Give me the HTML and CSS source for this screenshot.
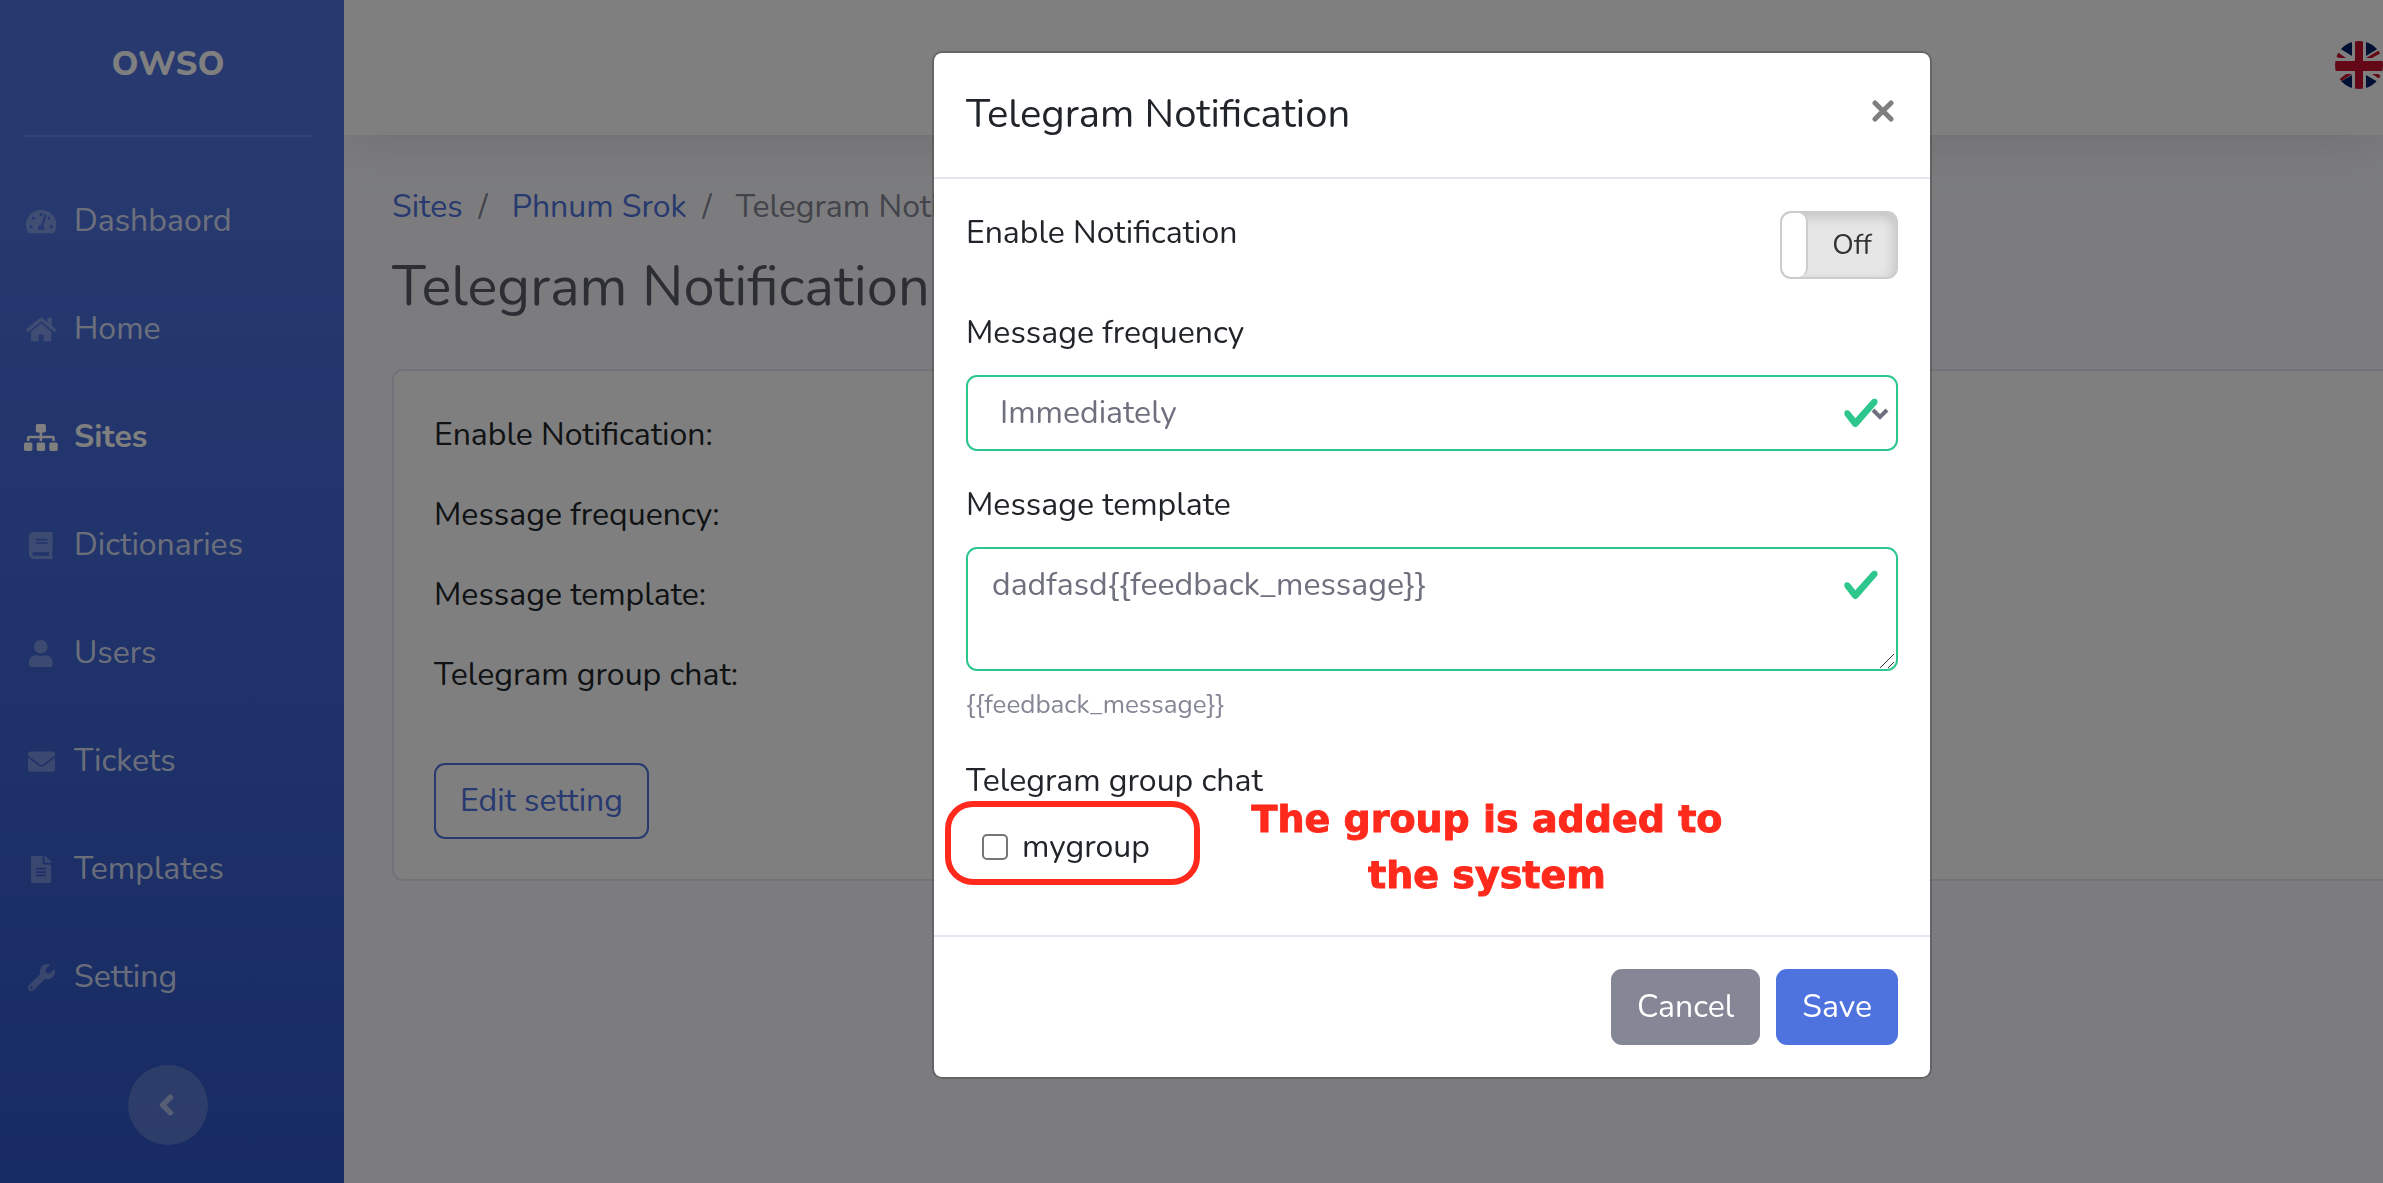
FILE: index.html
```html
<!DOCTYPE html>
<html lang="en">
<head>
<meta charset="utf-8">
<meta name="viewport" content="width=device-width, initial-scale=1">
<title>Telegram Notification</title>
<link rel="stylesheet" href="styles.css">
</head>
<body>
<div class="wrapper">
  <aside class="sidebar">
    <a class="brand" href="#">OWSO</a>
    <hr class="sidebar-divider">
    <nav class="nav">
      <a class="nav-link" href="#">
        <span class="nav-icon"><svg class="icon" viewBox="0 0 576 512" aria-hidden="true"><path d="M288 32C128.94 32 0 160.94 0 320c0 52.8 14.25 102.26 39.06 144.8 5.61 9.62 16.3 15.2 27.44 15.2h443c11.14 0 21.83-5.58 27.44-15.2C561.75 422.26 576 372.8 576 320c0-159.06-128.94-288-288-288zm0 64c14.71 0 26.58 10.13 30.32 23.65-1.11 2.26-2.64 4.23-3.45 6.67l-9.22 27.67c-5.13 3.49-10.97 6.01-17.64 6.01-17.67 0-32-14.33-32-32S270.33 96 288 96zM96 384c-17.67 0-32-14.33-32-32s14.33-32 32-32 32 14.33 32 32-14.33 32-32 32zm48-160c-17.67 0-32-14.33-32-32s14.33-32 32-32 32 14.33 32 32-14.33 32-32 32zm246.77-72.41l-61.33 184C343.13 347.33 352 364.54 352 384c0 11.72-3.38 22.55-8.88 32H232.88c-5.5-9.45-8.88-20.28-8.88-32 0-33.94 26.5-61.43 59.9-63.59l61.34-184.01c4.17-12.56 17.73-19.45 30.36-15.17 12.57 4.19 19.35 17.79 15.17 30.36zm14.66 57.2l15.52-46.55c3.47-1.29 7.13-2.23 11.05-2.23 17.67 0 32 14.33 32 32s-14.33 32-32 32c-11.38-.01-20.89-6.28-26.57-15.22zM480 384c-17.67 0-32-14.33-32-32s14.33-32 32-32 32 14.33 32 32-14.33 32-32 32z"/></svg></span>
        <span>Dashbaord</span>
      </a>
      <a class="nav-link" href="#">
        <span class="nav-icon"><svg class="icon" viewBox="0 0 576 512" aria-hidden="true"><path d="M280.37 148.26L96 300.11V464a16 16 0 0 0 16 16l112.06-.29a16 16 0 0 0 15.92-16V368a16 16 0 0 1 16-16h64a16 16 0 0 1 16 16v95.64a16 16 0 0 0 16 16.05L464 480a16 16 0 0 0 16-16V300L295.67 148.26a12.19 12.19 0 0 0-15.3 0zM571.6 251.47L488 182.56V44.05a12 12 0 0 0-12-12h-56a12 12 0 0 0-12 12v72.61L318.47 43a48 48 0 0 0-61 0L4.34 251.47a12 12 0 0 0-1.6 16.9l25.5 31A12 12 0 0 0 45.15 301l235.22-193.74a12.19 12.19 0 0 1 15.3 0L530.9 301a12 12 0 0 0 16.9-1.6l25.5-31a12 12 0 0 0-1.7-16.93z"/></svg></span>
        <span>Home</span>
      </a>
      <a class="nav-link active" href="#" aria-current="page">
        <span class="nav-icon"><svg class="icon" viewBox="0 0 640 512" aria-hidden="true"><path d="M128 352H32c-17.67 0-32 14.33-32 32v96c0 17.67 14.33 32 32 32h96c17.67 0 32-14.33 32-32v-96c0-17.67-14.33-32-32-32zm-24-80h192v48h48v-48h192v48h48v-57.59c0-21.17-17.23-38.41-38.41-38.41H344v-64h40c17.67 0 32-14.33 32-32V32c0-17.67-14.33-32-32-32H256c-17.67 0-32 14.33-32 32v96c0 17.67 14.33 32 32 32h40v64H94.41C73.23 224 56 241.23 56 262.41V320h48v-48zm264 80h-96c-17.67 0-32 14.33-32 32v96c0 17.67 14.33 32 32 32h96c17.67 0 32-14.33 32-32v-96c0-17.67-14.33-32-32-32zm240 0h-96c-17.67 0-32 14.33-32 32v96c0 17.67 14.33 32 32 32h96c17.67 0 32-14.33 32-32v-96c0-17.67-14.33-32-32-32z"/></svg></span>
        <span>Sites</span>
      </a>
      <a class="nav-link" href="#">
        <span class="nav-icon"><svg class="icon" viewBox="0 0 448 512" aria-hidden="true"><path d="M448 360V24c0-13.3-10.7-24-24-24H96C43 0 0 43 0 96v320c0 53 43 96 96 96h328c13.3 0 24-10.7 24-24v-16c0-7.5-3.5-14.3-8.9-18.7-4.2-15.4-4.2-59.3 0-74.7 5.4-4.3 8.9-11.1 8.9-18.6zM128 134c0-3.3 2.7-6 6-6h212c3.3 0 6 2.7 6 6v20c0 3.3-2.7 6-6 6H134c-3.3 0-6-2.7-6-6v-20zm0 64c0-3.3 2.7-6 6-6h212c3.3 0 6 2.7 6 6v20c0 3.3-2.7 6-6 6H134c-3.3 0-6-2.7-6-6v-20zm253.4 250H96c-17.7 0-32-14.3-32-32 0-17.6 14.4-32 32-32h285.4c-1.9 17.1-1.9 46.9 0 64z"/></svg></span>
        <span>Dictionaries</span>
      </a>
      <a class="nav-link" href="#">
        <span class="nav-icon"><svg class="icon" viewBox="0 0 448 512" aria-hidden="true"><path d="M224 256c70.7 0 128-57.3 128-128S294.7 0 224 0 96 57.3 96 128s57.3 128 128 128zm89.6 32h-16.7c-22.2 10.2-46.9 16-72.9 16s-50.6-5.8-72.9-16h-16.7C60.2 288 0 348.2 0 422.4V464c0 26.5 21.5 48 48 48h352c26.5 0 48-21.5 48-48v-41.6c0-74.2-60.2-134.4-134.4-134.4z"/></svg></span>
        <span>Users</span>
      </a>
      <a class="nav-link" href="#">
        <span class="nav-icon"><svg class="icon" viewBox="0 0 512 512" aria-hidden="true"><path d="M502.3 190.8c3.9-3.1 9.7-.2 9.7 4.7V400c0 26.5-21.5 48-48 48H48c-26.5 0-48-21.5-48-48V195.6c0-5 5.7-7.8 9.7-4.7 22.4 17.4 52.1 39.5 154.1 113.6 21.1 15.4 56.7 47.8 92.2 47.6 35.7.3 72-32.8 92.3-47.6 102-74.1 131.6-96.3 154-113.7zM256 320c23.2.4 56.6-29.2 73.4-41.4 132.7-96.3 142.8-104.7 173.4-128.7 5.8-4.5 9.2-11.5 9.2-18.9v-19c0-26.5-21.5-48-48-48H48c-26.5 0-48 21.5-48 48v19c0 7.4 3.4 14.3 9.2 18.9 30.6 23.9 40.7 32.4 173.4 128.7 16.8 12.2 50.2 41.8 73.4 41.4z"/></svg></span>
        <span>Tickets</span>
      </a>
      <a class="nav-link" href="#">
        <span class="nav-icon"><svg class="icon" viewBox="0 0 384 512" aria-hidden="true"><path d="M224 136V0H24C10.7 0 0 10.7 0 24v464c0 13.3 10.7 24 24 24h336c13.3 0 24-10.7 24-24V160H248c-13.2 0-24-10.8-24-24zm64 236c0 6.6-5.4 12-12 12H108c-6.6 0-12-5.4-12-12v-8c0-6.6 5.4-12 12-12h168c6.6 0 12 5.4 12 12v8zm0-64c0 6.6-5.4 12-12 12H108c-6.6 0-12-5.4-12-12v-8c0-6.6 5.4-12 12-12h168c6.6 0 12 5.4 12 12v8zm0-72v8c0 6.6-5.4 12-12 12H108c-6.6 0-12-5.4-12-12v-8c0-6.6 5.4-12 12-12h168c6.6 0 12 5.4 12 12zm96-114.1v6.1H256V0h6.1c6.4 0 12.5 2.5 17 7l97.9 98c4.5 4.5 7 10.6 7 16.9z"/></svg></span>
        <span>Templates</span>
      </a>
      <a class="nav-link" href="#">
        <span class="nav-icon"><svg class="icon" viewBox="0 0 512 512" aria-hidden="true"><path d="M507.73 109.1c-2.24-9.03-13.54-12.09-20.12-5.51l-74.36 74.36-67.88-11.31-11.31-67.88 74.36-74.36c6.62-6.62 3.43-17.9-5.66-20.16-47.38-11.74-99.55.91-136.58 37.93-39.64 39.64-50.55 97.1-34.05 147.2L18.74 402.76c-24.99 24.99-24.99 65.51 0 90.5 24.99 24.99 65.51 24.99 90.5 0l213.21-213.21c50.12 16.71 107.47 5.68 147.37-34.22 37.07-37.07 49.7-89.32 37.91-136.73zM64 472c-13.25 0-24-10.75-24-24 0-13.26 10.75-24 24-24s24 10.74 24 24c0 13.25-10.75 24-24 24z"/></svg></span>
        <span>Setting</span>
      </a>
    </nav>
    <button class="sidebar-toggle" type="button" aria-label="Collapse sidebar">
      <svg class="toggle-icon" viewBox="0 0 256 512" aria-hidden="true"><path d="M31.7 239l136-136c9.4-9.4 24.6-9.4 33.9 0l22.6 22.6c9.4 9.4 9.4 24.6 0 33.9L127.9 256l96.4 96.4c9.4 9.4 9.4 24.6 0 33.9L201.7 409c-9.4 9.4-24.6 9.4-33.9 0l-136-136c-9.5-9.4-9.5-24.6-.1-34z"/></svg>
    </button>
  </aside>

  <div class="content">
    <header class="topbar">
      <button class="language" type="button" aria-label="Language: English">
        <svg class="flag" viewBox="0 0 48 48" aria-hidden="true">
          <clipPath id="round"><circle cx="24" cy="24" r="24"/></clipPath>
          <g clip-path="url(#round)">
            <path fill="#fff" d="M0 0h48v48H0z"/>
            <path fill="#012169" d="M17 0v15L4 7V0zM31 0v15l13-8V0zM17 48V34L5 41v7zM31 48V34l12 7v7z"/>
            <path fill="#c8102e" d="M1 10l10 7H4l-4-2zM31 17l15-9v4l-9 5zM2 40l9-7h6L5 41zM37 33h6l6 4v4z"/>
            <path fill="#c8102e" d="M20 0h8v48h-8zM0 20h48v10H0z"/>
          </g>
        </svg>
      </button>
    </header>

    <main class="page">
      <nav aria-label="Breadcrumb">
        <ol class="breadcrumb">
          <li><a href="#">Sites</a></li>
          <li><a href="#">Phnum Srok</a></li>
          <li aria-current="page">Telegram Notification</li>
        </ol>
      </nav>
      <h1 class="page-title">Telegram Notification</h1>
      <section class="card">
        <div class="setting-list">
          <div>Enable Notification:</div>
          <div>Message frequency:</div>
          <div>Message template:</div>
          <div>Telegram group chat:</div>
        </div>
        <button class="btn btn-outline" type="button">Edit setting</button>
      </section>
    </main>
  </div>
</div>

<div class="modal-backdrop">
  <form class="modal" role="dialog" aria-labelledby="modal-title">
    <header class="modal-header">
      <h2 class="modal-title" id="modal-title">Telegram Notification</h2>
      <button class="close" type="button" aria-label="Close">
        <svg class="close-icon" viewBox="0 0 22 22" aria-hidden="true"><path d="M3 3l16 16M19 3L3 19"/></svg>
      </button>
    </header>

    <div class="modal-body">
      <div class="switch-row">
        <label for="enable">Enable Notification</label>
        <label class="switch">
          <input class="switch-input" type="checkbox" id="enable">
          <span class="switch-text">Off</span>
        </label>
      </div>

      <div class="field">
        <label for="frequency">Message frequency</label>
        <div class="control">
          <select class="input select" id="frequency">
            <option>Immediately</option>
          </select>
          <svg class="valid" viewBox="0 0 8 8" aria-hidden="true"><path d="M2.3 6.73L.6 4.53c-.4-1.04.46-1.4 1.1-.8l1.1 1.4 3.4-3.8c.6-.63 1.6-.27 1.2.7l-4 4.6c-.43.5-.8.4-1.1.1z"/></svg>
          <svg class="caret" viewBox="0 0 18 12" aria-hidden="true"><path d="M2 2l7 7 7-7"/></svg>
        </div>
      </div>

      <div class="field">
        <label for="template">Message template</label>
        <div class="control">
          <textarea class="input textarea" id="template" aria-describedby="template-help">dadfasd{{feedback_message}}</textarea>
          <svg class="valid" viewBox="0 0 8 8" aria-hidden="true"><path d="M2.3 6.73L.6 4.53c-.4-1.04.46-1.4 1.1-.8l1.1 1.4 3.4-3.8c.6-.63 1.6-.27 1.2.7l-4 4.6c-.43.5-.8.4-1.1.1z"/></svg>
          <svg class="grip" viewBox="0 0 16 16" aria-hidden="true"><path d="M1 15L15 1M9 15l6-6"/></svg>
        </div>
        <small class="help" id="template-help">{{feedback_message}}</small>
      </div>

      <fieldset class="group">
        <legend>Telegram group chat</legend>
        <div class="group-row">
          <input class="check" type="checkbox" id="mygroup">
          <label for="mygroup">mygroup</label>
          <span class="highlight"></span>
          <p class="callout">The group is added to the system</p>
        </div>
      </fieldset>
    </div>

    <footer class="modal-footer">
      <button class="btn btn-secondary" type="button">Cancel</button>
      <button class="btn btn-primary" type="submit">Save</button>
    </footer>
  </form>
</div>
</body>
</html>
```
FILE: styles.css
```css
* {
  box-sizing: border-box;
}

body {
  margin: 0;
  font: 32px/44px Nunito, Lato, sans-serif;
  color: #212529;
  background: #f8f9fc;
}

a {
  color: #4e73df;
  text-decoration: none;
}

button,
select,
textarea {
  font: inherit;
}

.wrapper {
  display: flex;
  min-height: 100vh;
}

/* Sidebar */

.sidebar {
  display: flex;
  flex-direction: column;
  flex: none;
  width: 344px;
  padding-right: 8px;
  background: linear-gradient(180deg, #4e73df 14%, #2f56c8 100%);
}

.brand {
  padding: 42px 0 49px;
  color: #fff;
  font-size: 34px;
  font-weight: 800;
  text-align: center;
}

.sidebar-divider {
  width: 288px;
  height: 2px;
  margin: 0 24px 29px;
  border: 0;
  background: rgba(255, 255, 255, .15);
}

.nav-link {
  display: flex;
  align-items: center;
  gap: 16px;
  padding: 33px 24px 31px;
  color: rgba(255, 255, 255, .8);
}

.nav-icon {
  display: flex;
  justify-content: center;
  width: 34px;
  color: rgba(255, 255, 255, .3);
}

.icon {
  height: 27px;
  fill: currentColor;
}

.nav-link.active,
.active .nav-icon {
  color: #fff;
  font-weight: 700;
}

.sidebar-toggle {
  display: flex;
  align-items: center;
  justify-content: center;
  align-self: center;
  width: 80px;
  height: 80px;
  margin: 35px 0 32px;
  padding: 0 4px 0 0;
  border: 0;
  border-radius: 50%;
  background: rgba(255, 255, 255, .2);
}

.toggle-icon {
  height: 34px;
  fill: rgba(255, 255, 255, .5);
}

/* Page */

.content {
  flex: 1;
  min-width: 0;
  overflow: hidden;
}

.topbar {
  display: flex;
  align-items: center;
  justify-content: flex-end;
  height: 135px;
  background: #fff;
  box-shadow: 0 5px 56px rgba(58, 59, 69, .15);
}

.language {
  display: flex;
  padding: 0;
  margin-bottom: 5px;
  border: 0;
  background: none;
}

.flag {
  width: 48px;
  height: 48px;
}

.page {
  padding: 50px 0 48px 48px;
}

.breadcrumb {
  display: flex;
  margin: 0 0 24px;
  padding: 0;
  list-style: none;
  color: #858796;
}

.breadcrumb li + li::before {
  content: "/";
  padding: 0 24px 0 16px;
}

.page-title {
  margin: 0 0 48px;
  color: #5a5c69;
  font-size: 56px;
  font-weight: 400;
  line-height: 68px;
}

.card {
  padding: 42px 40px 40px;
  border: 2px solid #e3e6f0;
  border-right: 0;
  border-radius: 11px 0 0 11px;
  background: #fff;
}

.setting-list {
  display: grid;
  gap: 36px;
  margin-bottom: 66px;
}

.btn {
  height: 76px;
  padding: 0 24px;
  border: 2px solid transparent;
  border-radius: 11px;
}

.btn-outline {
  border-color: #4e73df;
  color: #4e73df;
  background: none;
}

.btn-primary {
  color: #fff;
  background: #4e73df;
}

.btn-secondary {
  color: #fff;
  background: #858796;
}

/* Modal */

.modal-backdrop {
  position: fixed;
  inset: 0;
  display: flex;
  justify-content: center;
  align-items: flex-start;
  padding: 51px 0 0 481px;
  background: rgba(0, 0, 0, .5);
}

.modal {
  width: 1000px;
  border: 2px solid rgba(0, 0, 0, .2);
  border-radius: 10px;
  background: #fff padding-box;
}

.modal-header {
  display: flex;
  justify-content: space-between;
  padding: 31px 32px 33px;
  border-bottom: 2px solid #e3e6f0;
}

.modal-title {
  margin: 0;
  font-size: 40px;
  font-weight: 400;
  line-height: 60px;
}

.close {
  display: flex;
  align-items: center;
  padding: 0 4px 6px;
  border: 0;
  background: none;
}

.close-icon {
  width: 22px;
  height: 22px;
  fill: none;
  stroke: #7f7f7f;
  stroke-width: 5;
  stroke-linecap: round;
}

.modal-body {
  display: grid;
  gap: 32px;
  padding: 32px 32px 66px;
}

.switch-row {
  display: flex;
  justify-content: space-between;
  align-items: flex-start;
}

.switch {
  display: flex;
  align-items: center;
  width: 118px;
  height: 68px;
  border: 2px solid #ccc;
  border-radius: 11px;
  overflow: hidden;
  background: #e6e6e6;
  box-shadow: inset -2px 4px 12px rgba(0, 0, 0, .16);
}

.switch-input {
  appearance: none;
  flex: none;
  width: 26px;
  height: 64px;
  margin: 0;
  border-right: 2px solid #ccc;
  border-radius: 9px;
  background: #fff;
}

.switch-text {
  flex: 1;
  color: #333;
  font-size: 28px;
  text-align: center;
}

.field {
  display: flex;
  flex-direction: column;
}

.control {
  position: relative;
  display: flex;
  margin-top: 20px;
}

.input {
  width: 100%;
  border: 2px solid #2dc78e;
  border-radius: 11px;
  color: #6e707e;
  background: #fff;
}

.select {
  appearance: none;
  height: 76px;
  padding: 0 80px 0 32px;
}

.textarea {
  height: 124px;
  padding: 14px 80px 12px 24px;
  resize: none;
}

.valid {
  position: absolute;
  top: 19px;
  right: 18px;
  width: 38px;
  height: 38px;
  fill: #2dc78e;
}

.caret {
  position: absolute;
  top: 33px;
  right: 9px;
  width: 18px;
  height: 12px;
  fill: none;
  stroke: #6e707e;
  stroke-width: 4;
}

.grip {
  position: absolute;
  right: 3px;
  bottom: 2px;
  width: 16px;
  height: 16px;
  fill: none;
  stroke: #333;
}

.help {
  margin-top: 12px;
  color: #858796;
  font-size: 26px;
}

.group {
  margin: 0;
  padding: 0;
  border: 0;
}

.group legend {
  padding: 0;
}

.group-row {
  position: relative;
  display: flex;
  align-items: center;
  gap: 14px;
  margin-top: 22px;
  padding-left: 16px;
}

.check {
  appearance: none;
  width: 26px;
  height: 26px;
  margin: 0;
  border: 2px solid #767676;
  border-radius: 5px;
  background: #fff;
}

.highlight {
  position: absolute;
  top: -24px;
  left: -21px;
  width: 255px;
  height: 84px;
  border: 6px solid #ff2a1c;
  border-radius: 28px;
  pointer-events: none;
}

.callout {
  position: absolute;
  top: -34px;
  left: 281px;
  width: 480px;
  margin: 0;
  color: #ff2a1c;
  font: 900 38px/56px "Arial Black", "DejaVu Sans", sans-serif;
  text-align: center;
  -webkit-text-stroke: 1px #ff2a1c;
}

.modal-footer {
  display: flex;
  justify-content: flex-end;
  gap: 16px;
  padding: 32px;
  border-top: 2px solid #e3e6f0;
}
```
